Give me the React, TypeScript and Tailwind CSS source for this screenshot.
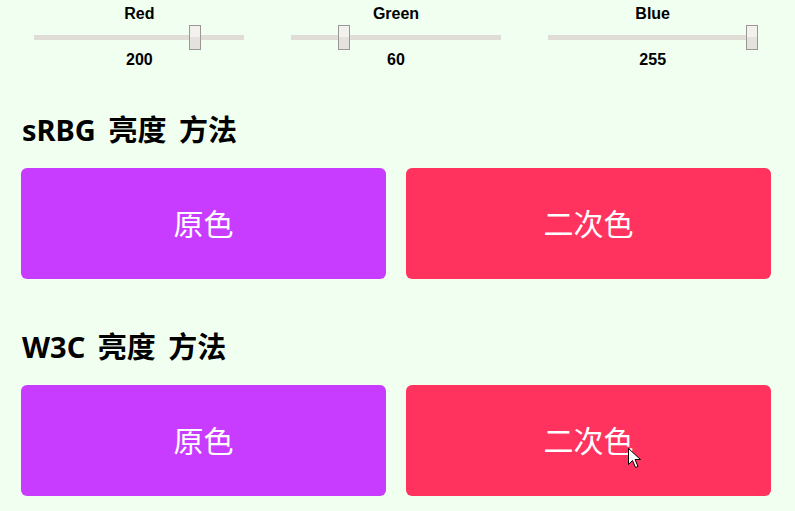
import React from 'react';

const channels = [
  { name: 'Red', value: 200 },
  { name: 'Green', value: 60 },
  { name: 'Blue', value: 255 },
];

const Slider = ({ name, value }: { name: string; value: number }) => {
  const left = Math.round((value / 255) * 198);
  return (
    <div className="flex-1 flex flex-col items-center">
      <div className="mt-[5px] text-[16px] leading-[18px] font-bold text-black font-['Liberation_Sans',Arial,sans-serif]">
        {name}
      </div>
      <div className="relative mt-[2px] h-[25px] w-[210px]">
        <div className="absolute left-0 right-0 top-[10px] h-[5px] bg-[#e0ddd7]" />
        <div
          className="absolute top-0 h-[25px] w-[12px] border border-[#9a9896] bg-gradient-to-b from-[#f3f1ee] from-50% to-[#e5e2de] to-50%"
          style={{ left }}
        />
      </div>
      <div className="mt-[1px] text-[16px] leading-[18px] font-bold text-black font-['Liberation_Sans',Arial,sans-serif]">
        {value}
      </div>
    </div>
  );
};

const Section = ({ title, top }: { title: string; top: string }) => (
  <div className={top}>
    <h2 className="px-[11px] text-[29px] leading-[40px] font-bold text-black [word-spacing:5px]">{title}</h2>
    <div className="mt-[18px] grid grid-cols-2 gap-[20px] px-[10px]">
      <div className="h-[111px] rounded-[6px] bg-[#c83cff] flex items-center justify-center text-white text-[30px]">
        原色
      </div>
      <div className="h-[111px] rounded-[6px] bg-[#ff335e] flex items-center justify-center text-white text-[30px]">
        二次色
      </div>
    </div>
  </div>
);

export default function App() {
  return (
    <div className="relative w-[795px] h-[511px] overflow-hidden bg-[#f0fff0] font-['Noto_Sans','Noto_Sans_CJK_SC',sans-serif]">
      <div className="ml-[11px] w-[770px]">
        <div className="flex">
          {channels.map((c) => (
            <Slider key={c.name} name={c.name} value={c.value} />
          ))}
        </div>
        <Section title="sRBG 亮度 方法" top="mt-[41px]" />
        <Section title="W3C 亮度 方法" top="mt-[48px]" />
      </div>
      {/* mouse pointer in the shot */}
      <svg className="absolute left-[628px] top-[448px]" width="13" height="21" viewBox="0 0 13 21">
        <path d="M0.5 0.5 L0.5 16.5 L4.5 12.5 L7.5 19.5 L10 18.5 L7 11.5 L12.5 11.5 Z" fill="#fff" stroke="#000" strokeWidth="1" />
      </svg>
    </div>
  );
}
